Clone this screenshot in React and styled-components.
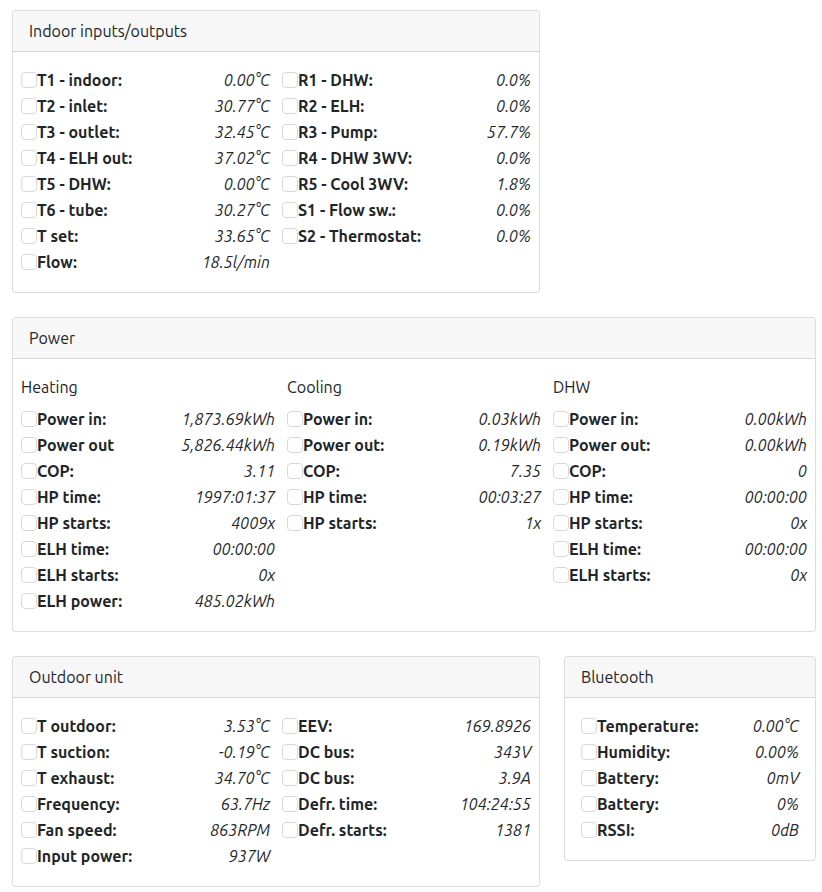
import React from "react";
import styled, { createGlobalStyle } from "styled-components";

const Global = createGlobalStyle`
  html, body { margin: 0; padding: 0; background: #fff; }
  body {
    font-family: Ubuntu, "Noto Sans", "Open Sans", sans-serif;
    font-size: 16px;
    color: #212529;
  }
`;

const Page = styled.div`
  padding: 10px 7px 0 12px;
  display: flex;
  flex-direction: column;
  gap: 24px;
  width: 804px;
`;

const Row = styled.div`
  display: grid;
  grid-template-columns: ${(p) => p.$cols || "1fr"};
  gap: 24px;
  align-items: start;
`;

const Card = styled.section`
  border: 1px solid rgba(0, 0, 0, 0.135);
  border-radius: 4px;
  background: #fff;
  overflow: hidden;
  width: ${(p) => p.$width || "auto"};
  box-sizing: border-box;
`;

const CardHeader = styled.header`
  height: 40px;
  display: flex;
  align-items: center;
  padding: 0 16px;
  background: #f7f7f7;
  border-bottom: 1px solid rgba(0, 0, 0, 0.135);
  font-size: 16px;
`;

const CardBody = styled.div`
  padding: 15px ${(p) => p.$px || 8}px 17px;
  display: grid;
  grid-template-columns: ${(p) => p.$cols || "1fr"};
  column-gap: ${(p) => p.$gap || 12}px;
`;

const Column = styled.div`
  display: flex;
  flex-direction: column;
`;

const SubHead = styled.div`
  height: 24px;
  line-height: 24px;
  margin: 1px 0 7px;
`;

const Item = styled.div`
  display: flex;
  align-items: center;
  height: 26px;
`;

const Check = styled.span`
  width: 14px;
  height: 14px;
  border: 1px solid #d6d8db;
  border-radius: 4px;
  flex: none;
`;

const Label = styled.span`
  font-weight: 700;
  white-space: nowrap;
`;

const Value = styled.span`
  margin-left: auto;
  font-style: italic;
  white-space: nowrap;
`;

const List = ({ items }) => (
  <Column>
    {items.map(([l, v], i) => (
      <Item key={i}>
        <Check />
        <Label>{l}</Label>
        <Value>{v}</Value>
      </Item>
    ))}
  </Column>
);

const indoorA = [
  ["T1 - indoor:", "0.00°C"],
  ["T2 - inlet:", "30.77°C"],
  ["T3 - outlet:", "32.45°C"],
  ["T4 - ELH out:", "37.02°C"],
  ["T5 - DHW:", "0.00°C"],
  ["T6 - tube:", "30.27°C"],
  ["T set:", "33.65°C"],
  ["Flow:", "18.5l/min"],
];
const indoorB = [
  ["R1 - DHW:", "0.0%"],
  ["R2 - ELH:", "0.0%"],
  ["R3 - Pump:", "57.7%"],
  ["R4 - DHW 3WV:", "0.0%"],
  ["R5 - Cool 3WV:", "1.8%"],
  ["S1 - Flow sw.:", "0.0%"],
  ["S2 - Thermostat:", "0.0%"],
];

const heating = [
  ["Power in:", "1,873.69kWh"],
  ["Power out", "5,826.44kWh"],
  ["COP:", "3.11"],
  ["HP time:", "1997:01:37"],
  ["HP starts:", "4009x"],
  ["ELH time:", "00:00:00"],
  ["ELH starts:", "0x"],
  ["ELH power:", "485.02kWh"],
];
const cooling = [
  ["Power in:", "0.03kWh"],
  ["Power out:", "0.19kWh"],
  ["COP:", "7.35"],
  ["HP time:", "00:03:27"],
  ["HP starts:", "1x"],
];
const dhw = [
  ["Power in:", "0.00kWh"],
  ["Power out:", "0.00kWh"],
  ["COP:", "0"],
  ["HP time:", "00:00:00"],
  ["HP starts:", "0x"],
  ["ELH time:", "00:00:00"],
  ["ELH starts:", "0x"],
];

const outA = [
  ["T outdoor:", "3.53°C"],
  ["T suction:", "-0.19°C"],
  ["T exhaust:", "34.70°C"],
  ["Frequency:", "63.7Hz"],
  ["Fan speed:", "863RPM"],
  ["Input power:", "937W"],
];
const outB = [
  ["EEV:", "169.8926"],
  ["DC bus:", "343V"],
  ["DC bus:", "3.9A"],
  ["Defr. time:", "104:24:55"],
  ["Defr. starts:", "1381"],
];
const bt = [
  ["Temperature:", "0.00°C"],
  ["Humidity:", "0.00%"],
  ["Battery:", "0mV"],
  ["Battery:", "0%"],
  ["RSSI:", "0dB"],
];

export default function App() {
  return (
    <>
      <Global />
      <Page>
        <Card $width="528px">
          <CardHeader>Indoor inputs/outputs</CardHeader>
          <CardBody $cols="1fr 1fr">
            <List items={indoorA} />
            <List items={indoorB} />
          </CardBody>
        </Card>

        <Card>
          <CardHeader>Power</CardHeader>
          <CardBody $cols="1fr 1fr 1fr" $gap={12}>
            <Column>
              <SubHead>Heating</SubHead>
              <List items={heating} />
            </Column>
            <Column>
              <SubHead>Cooling</SubHead>
              <List items={cooling} />
            </Column>
            <Column>
              <SubHead>DHW</SubHead>
              <List items={dhw} />
            </Column>
          </CardBody>
        </Card>

        <Row $cols="528px 1fr">
          <Card>
            <CardHeader>Outdoor unit</CardHeader>
            <CardBody $cols="1fr 1fr">
              <List items={outA} />
              <List items={outB} />
            </CardBody>
          </Card>
          <Card>
            <CardHeader>Bluetooth</CardHeader>
            <CardBody $px={16}>
              <List items={bt} />
            </CardBody>
          </Card>
        </Row>
      </Page>
    </>
  );
}
